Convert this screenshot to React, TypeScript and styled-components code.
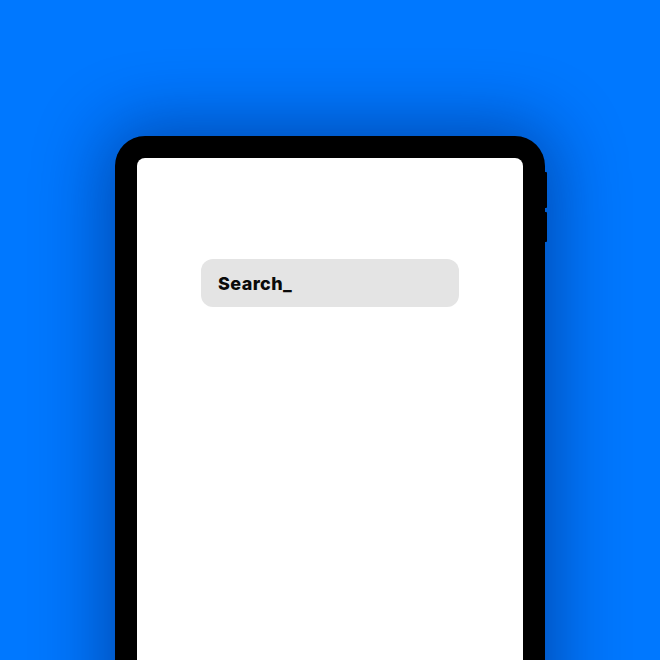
import styled, { createGlobalStyle } from 'styled-components';

const GlobalStyle = createGlobalStyle`
  html, body {
    margin: 0;
    padding: 0;
    background: #0078ff;
    overflow: hidden;
  }
  * {
    box-sizing: border-box;
  }
`;

const Stage = styled.div`
  width: 100vw;
  height: 100vh;
  background: #0078ff;
  display: flex;
  justify-content: center;
  padding-top: 136px;
  overflow: hidden;
`;

const Device = styled.div`
  position: relative;
  width: 430px;
  height: 640px;
  flex-shrink: 0;
  background: #000;
  border-radius: 30px;
  padding: 22px;
  box-shadow: 0 0 70px 10px rgba(0, 20, 80, 0.45);
`;

const SideButton = styled.span<{ top: number; height: number }>`
  position: absolute;
  right: -2px;
  top: ${(p) => p.top}px;
  width: 2px;
  height: ${(p) => p.height}px;
  background: #000;
  border-radius: 0 1px 1px 0;
`;

const Screen = styled.div`
  width: 100%;
  height: 100%;
  background: #fff;
  border-radius: 8px;
  padding: 101px 64px 0;
`;

const SearchBox = styled.div`
  height: 48px;
  background: #e4e4e4;
  border-radius: 12px;
  display: flex;
  align-items: center;
  padding: 0 17px;
  font-family: Inter, 'Noto Sans', sans-serif;
  font-weight: 800;
  font-size: 18px;
  color: #0a0a0a;
  letter-spacing: 0.4px;
`;

export default function App() {
  return (
    <>
      <GlobalStyle />
      <Stage>
        <Device>
          <SideButton top={36} height={36} />
          <SideButton top={76} height={30} />
          <Screen>
            <SearchBox>Search_</SearchBox>
          </Screen>
        </Device>
      </Stage>
    </>
  );
}
